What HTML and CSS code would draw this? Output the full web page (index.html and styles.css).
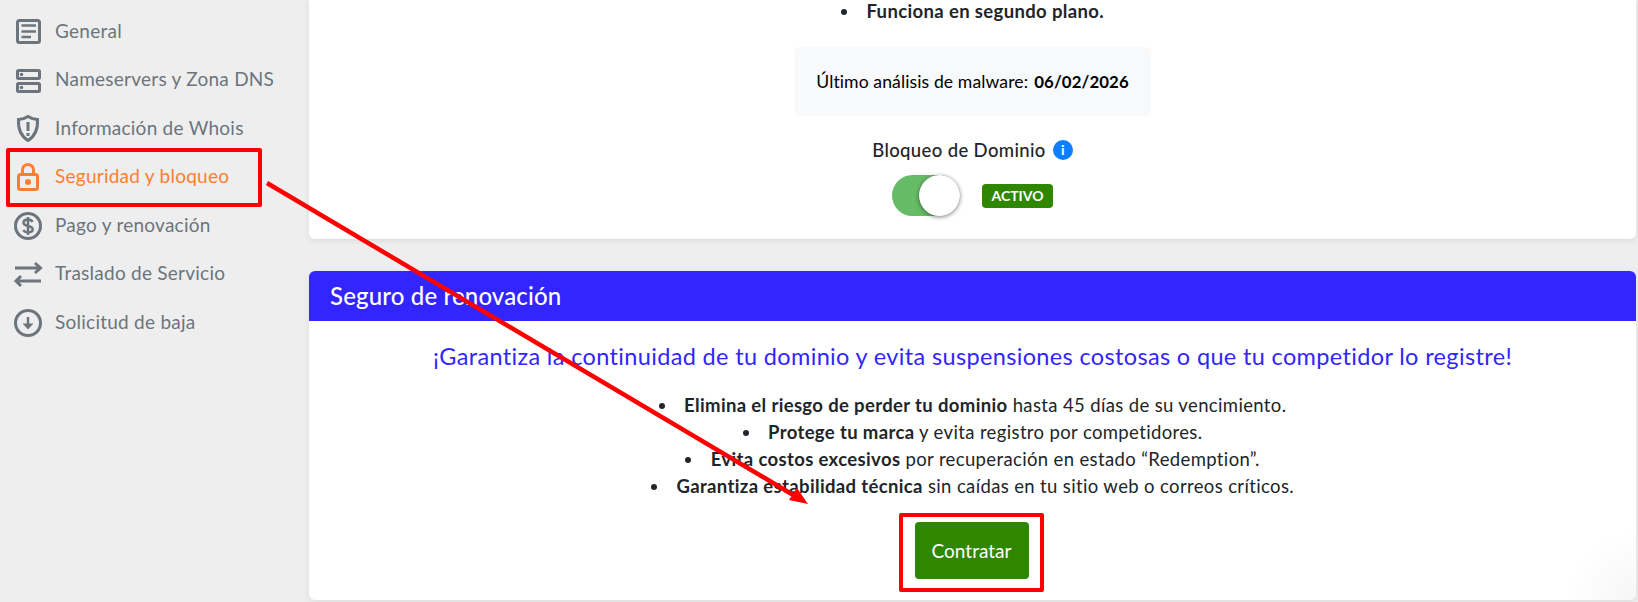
FILE: index.html
```html
<!DOCTYPE html>
<html lang="es">
<head>
    <meta charset="UTF-8">
    <meta name="viewport" content="width=device-width, initial-scale=1.0">
    <title>Seguridad y bloqueo</title>
    <link rel="stylesheet" href="styles.css">
</head>
<body>
    <aside class="sidebar">
        <a class="side-link">
            <svg class="side-icon" viewBox="0 0 28 28"><rect x="3.500" y="4.500" width="22" height="22" rx="2"/><path class="thin" d="M7.500 9.500H22M7.500 15.500H22M7.500 21H17"/></svg>
            General
        </a>
        <a class="side-link">
            <svg class="side-icon" viewBox="0 0 28 28"><rect x="3.500" y="5.500" width="22" height="8" rx="1"/><rect x="3.500" y="18.500" width="22" height="8" rx="1"/><circle class="dot-fill" cx="7.500" cy="9.500" r="1.800"/><circle class="dot-fill" cx="7.500" cy="22.500" r="1.800"/></svg>
            Nameservers y Zona DNS
        </a>
        <a class="side-link">
            <svg class="side-icon" viewBox="0 0 28 28"><path d="M14 3.500c3 2 6 2.800 9.500 3 .5 9-1.500 16-9.500 21-8-5-10-12-9.500-21 3.500-.2 6.500-1 9.500-3z"/><path d="M14 9v9M14 20v3"/></svg>
            Información de Whois
        </a>
        <a class="side-link side-link-active">
            <svg class="side-icon" viewBox="0 0 28 28"><rect x="4.500" y="12.500" width="19" height="15" rx="2"/><path d="M8.500 12.500V8a5.500 5.500 0 0 1 11 0v4.500"/><circle class="dot-fill" cx="14" cy="20" r="3"/></svg>
            Seguridad y bloqueo
        </a>
        <a class="side-link">
            <svg class="side-icon" viewBox="0 0 28 28"><circle cx="14" cy="16" r="12.500"/><path class="thin" d="M18.500 12c-.8-1.600-2.500-2.400-4.500-2.400-2.700 0-4.500 1.300-4.500 3.200 0 4.400 9.200 2 9.200 6.500 0 1.900-2 3.100-4.700 3.100-2 0-3.800-.8-4.700-2.400M14 7v18"/></svg>
            Pago y renovación
        </a>
        <a class="side-link">
            <svg class="side-icon" viewBox="0 0 28 28"><path d="M1 9h25M21 4l5.500 5-5.500 5M27 22H2M7 17l-5 5 5 5"/></svg>
            Traslado de Servicio
        </a>
        <a class="side-link">
            <svg class="side-icon" viewBox="0 0 28 28"><circle cx="14" cy="16" r="12.500"/><path class="thin" d="M14 10v8"/><polygon class="dot-fill" points="8.500,16.500 19.500,16.500 14,22.500"/></svg>
            Solicitud de baja
        </a>
    </aside>

    <main class="content">
        <section class="card card-top">
            <ul class="bullet-list">
                <li><strong>Funciona en segundo plano.</strong></li>
            </ul>
            <div class="scan-box">Último análisis de malware: <strong>06/02/2026</strong></div>
            <div class="lock-title">
                Bloqueo de Dominio
                <span class="info-icon">i</span>
            </div>
            <div class="lock-row">
                <span class="toggle"><span class="toggle-knob"></span></span>
                <span class="badge">ACTIVO</span>
            </div>
        </section>

        <section class="card card-insurance">
            <h2 class="card-header">Seguro de renovación</h2>
            <div class="card-body">
                <h3 class="tagline">¡Garantiza la continuidad de tu dominio y evita suspensiones costosas o que tu competidor lo registre!</h3>
                <ul class="bullet-list">
                    <li><strong>Elimina el riesgo de perder tu dominio</strong> hasta 45 días de su vencimiento.</li>
                    <li><strong>Protege tu marca</strong> y evita registro por competidores.</li>
                    <li><strong>Evita costos excesivos</strong> por recuperación en estado “Redemption”.</li>
                    <li><strong>Garantiza estabilidad técnica</strong> sin caídas en tu sitio web o correos críticos.</li>
                </ul>
                <button class="btn-contract">Contratar</button>
            </div>
        </section>
    </main>

    <!-- anotaciones rojas sobre la captura -->
    <div class="mark mark-menu"></div>
    <div class="mark mark-button"></div>
    <svg class="mark-arrow" viewBox="0 0 1638 602" width="1638" height="602">
        <line x1="267" y1="183" x2="795" y2="496"/>
        <polygon points="808,504 789,500 797,488"/>
    </svg>
</body>
</html>
```

FILE: styles.css
```css
html, body {
    margin: 0;
    padding: 0;
    height: 602px;
    overflow: hidden;
}

body {
    display: flex;
    background-color: #eeeeee;
    font-family: Lato, sans-serif;
    font-size: 18.5px;
    letter-spacing: 0.36px;
    color: #212529;
}

.sidebar {
    width: 309px;
    flex-shrink: 0;
    padding: 6px 0 0 14px;
    box-sizing: border-box;
}

.side-link {
    display: flex;
    align-items: center;
    gap: 13px;
    height: 48.5px;
    font-size: 19px;
    letter-spacing: 0.25px;
    color: #6c757d;
}

.side-link-active {
    color: #fd7e2f;
}

.side-icon {
    width: 28px;
    height: 28px;
    flex-shrink: 0;
    overflow: visible;
    fill: none;
    stroke: currentColor;
    stroke-width: 3;
}

.side-icon .thin {
    stroke-width: 2.500;
}

.side-icon .dot-fill {
    fill: currentColor;
    stroke: none;
}

.content {
    width: 1327px;
    display: flex;
    flex-direction: column;
    gap: 32px;
}

.card {
    background-color: white;
    border-radius: 6px;
    box-shadow: 0 2px 6px rgba(0, 0, 0, 0.08);
}

.card-top {
    height: 239px;
    border-top-left-radius: 0;
    border-top-right-radius: 0;
    display: flex;
    flex-direction: column;
    align-items: center;
}

.card-insurance {
    height: 329px;
    overflow: hidden;
    background-image: radial-gradient(circle at 100% 100%, #f6f6f6, white 70px);
}

.bullet-list {
    list-style-position: inside;
    list-style-type: disc;
    margin: 0;
    padding: 0;
    text-align: center;
    line-height: 27px;
}

.bullet-list strong {
    font-weight: 700;
}

.card-top .bullet-list {
    margin-top: -2px;
}

.scan-box {
    margin-top: 22px;
    width: 357px;
    height: 69px;
    box-sizing: border-box;
    display: flex;
    align-items: center;
    justify-content: center;
    gap: 6px;
    background-color: #f8f9fa;
    border-radius: 6px;
    color: #000;
    font-size: 17.6px;
    letter-spacing: 0.1px;
    white-space: nowrap;
}

.scan-box strong {
    font-size: 16.8px;
    font-weight: 700;
}

.lock-title {
    margin-top: 22px;
    display: flex;
    align-items: center;
    gap: 7px;
    height: 24px;
    font-weight: 500;
}

.info-icon {
    width: 20px;
    height: 20px;
    border-radius: 50%;
    background-color: #0d7eff;
    color: white;
    font-size: 14px;
    font-weight: 700;
    line-height: 20px;
    letter-spacing: 0;
    text-align: center;
}

.lock-row {
    margin-top: 13px;
    display: flex;
    align-items: center;
    gap: 22px;
}

.toggle {
    display: flex;
    justify-content: flex-end;
    width: 68px;
    height: 41px;
    border-radius: 21px;
    background-color: #66bb66;
}

.toggle-knob {
    width: 41px;
    height: 41px;
    border-radius: 50%;
    background-color: white;
    box-shadow: 0 1px 4px rgba(0, 0, 0, 0.5);
}

.badge {
    padding: 0 10px;
    height: 24px;
    line-height: 24px;
    border-radius: 4px;
    background-color: #2f8700;
    color: white;
    font-size: 14px;
    font-weight: 700;
    letter-spacing: 0;
}

.card-header {
    margin: 0;
    height: 50px;
    padding-left: 21px;
    background-color: #3225ff;
    color: white;
    font-size: 24px;
    font-weight: 500;
    letter-spacing: 0.15px;
    line-height: 49px;
}

.card-body {
    display: flex;
    flex-direction: column;
    align-items: center;
}

.tagline {
    margin: 19px 0 20px;
    color: #3225ff;
    font-size: 23.500px;
    font-weight: 400;
    letter-spacing: 0.35px;
    line-height: 32px;
    white-space: nowrap;
}

.btn-contract {
    margin-top: 22px;
    margin-right: 2px;
    width: 114px;
    height: 57px;
    border: 0;
    border-radius: 4px;
    background-color: #2f8700;
    color: white;
    font-family: inherit;
    font-size: 19px;
    letter-spacing: 0;
}

.mark {
    position: absolute;
    border: 4px solid #ff0000;
    border-radius: 2px;
    box-sizing: border-box;
}

.mark-menu {
    left: 6px;
    top: 148px;
    width: 256px;
    height: 59px;
}

.mark-button {
    left: 899px;
    top: 513px;
    width: 145px;
    height: 79px;
}

.mark-arrow {
    position: absolute;
    left: 0;
    top: 0;
    pointer-events: none;
}

.mark-arrow line {
    stroke: #ff0000;
    stroke-width: 4.500;
}

.mark-arrow polygon {
    fill: #ff0000;
}
```
